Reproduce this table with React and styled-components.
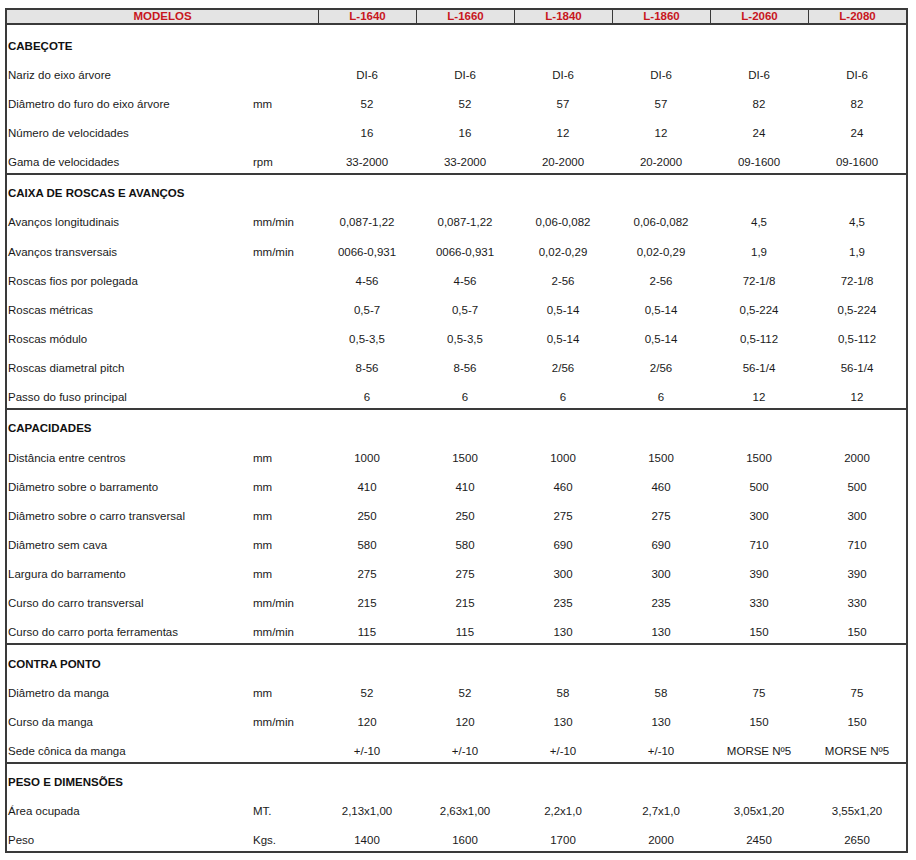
import React from 'react';
import styled, { createGlobalStyle } from 'styled-components';

const GlobalStyle = createGlobalStyle`
  html, body {
    margin: 0;
    background: #fff;
  }
  body {
    font-family: "Liberation Sans", Arial, sans-serif;
    font-size: 11.5px;
    color: #1a1a1a;
  }
`;

const COLS = '246px 65px repeat(6, 1fr)';

const Sheet = styled.div`
  width: 899px;
  margin: 8px 0 0 5px;
  border: 2px solid #3a3a3a;
`;

const HeaderRow = styled.div`
  display: grid;
  grid-template-columns: ${COLS};
  background: #e4e4e4;
  border-bottom: 2px solid #3a3a3a;
`;

const HeaderCell = styled.div`
  grid-column: ${(p) => (p.$wide ? 'span 2' : 'auto')};
  height: 13px;
  line-height: 13px;
  text-align: center;
  font-weight: bold;
  color: #c8161d;
  border-left: ${(p) => (p.$wide ? 'none' : '1px solid #3a3a3a')};
`;

const Section = styled.div`
  padding-top: ${(p) => (p.$first ? '2px' : '0')};
  border-bottom: ${(p) => (p.$last ? 'none' : '2px solid #3a3a3a')};
`;

const Row = styled.div`
  display: grid;
  grid-template-columns: ${COLS};
  align-items: end;
  height: 29.15px;
  box-sizing: border-box;
  padding-bottom: 3.5px;
  line-height: 13px;
`;

const Label = styled.div`
  padding-left: 1px;
  white-space: nowrap;
  font-weight: ${(p) => (p.$title ? 'bold' : 'normal')};
  color: ${(p) => (p.$title ? '#111' : '#1a1a1a')};
`;

const Unit = styled.div`
  white-space: nowrap;
`;

const Value = styled.div`
  text-align: center;
  white-space: nowrap;
`;

const models = ['L-1640', 'L-1660', 'L-1840', 'L-1860', 'L-2060', 'L-2080'];

const sections = [
  {
    title: 'CABEÇOTE',
    rows: [
      ['Nariz do eixo árvore', '', ['DI-6', 'DI-6', 'DI-6', 'DI-6', 'DI-6', 'DI-6']],
      ['Diâmetro do furo do eixo árvore', 'mm', ['52', '52', '57', '57', '82', '82']],
      ['Número de velocidades', '', ['16', '16', '12', '12', '24', '24']],
      ['Gama de velocidades', 'rpm', ['33-2000', '33-2000', '20-2000', '20-2000', '09-1600', '09-1600']],
    ],
  },
  {
    title: 'CAIXA DE ROSCAS E AVANÇOS',
    rows: [
      ['Avanços longitudinais', 'mm/min', ['0,087-1,22', '0,087-1,22', '0,06-0,082', '0,06-0,082', '4,5', '4,5']],
      ['Avanços transversais', 'mm/min', ['0066-0,931', '0066-0,931', '0,02-0,29', '0,02-0,29', '1,9', '1,9']],
      ['Roscas fios por polegada', '', ['4-56', '4-56', '2-56', '2-56', '72-1/8', '72-1/8']],
      ['Roscas métricas', '', ['0,5-7', '0,5-7', '0,5-14', '0,5-14', '0,5-224', '0,5-224']],
      ['Roscas módulo', '', ['0,5-3,5', '0,5-3,5', '0,5-14', '0,5-14', '0,5-112', '0,5-112']],
      ['Roscas diametral pitch', '', ['8-56', '8-56', '2/56', '2/56', '56-1/4', '56-1/4']],
      ['Passo do fuso principal', '', ['6', '6', '6', '6', '12', '12']],
    ],
  },
  {
    title: 'CAPACIDADES',
    rows: [
      ['Distância entre centros', 'mm', ['1000', '1500', '1000', '1500', '1500', '2000']],
      ['Diâmetro sobre o barramento', 'mm', ['410', '410', '460', '460', '500', '500']],
      ['Diâmetro sobre o carro transversal', 'mm', ['250', '250', '275', '275', '300', '300']],
      ['Diâmetro sem cava', 'mm', ['580', '580', '690', '690', '710', '710']],
      ['Largura do barramento', 'mm', ['275', '275', '300', '300', '390', '390']],
      ['Curso do carro transversal', 'mm/min', ['215', '215', '235', '235', '330', '330']],
      ['Curso do carro porta ferramentas', 'mm/min', ['115', '115', '130', '130', '150', '150']],
    ],
  },
  {
    title: 'CONTRA PONTO',
    rows: [
      ['Diâmetro da manga', 'mm', ['52', '52', '58', '58', '75', '75']],
      ['Curso da manga', 'mm/min', ['120', '120', '130', '130', '150', '150']],
      ['Sede cônica da manga', '', ['+/-10', '+/-10', '+/-10', '+/-10', 'MORSE Nº5', 'MORSE Nº5']],
    ],
  },
  {
    title: 'PESO E DIMENSÕES',
    rows: [
      ['Área ocupada', 'MT.', ['2,13x1,00', '2,63x1,00', '2,2x1,0', '2,7x1,0', '3,05x1,20', '3,55x1,20']],
      ['Peso', 'Kgs.', ['1400', '1600', '1700', '2000', '2450', '2650']],
    ],
  },
];

export default function App() {
  return (
    <>
      <GlobalStyle />
      <Sheet>
        <HeaderRow>
          <HeaderCell $wide>MODELOS</HeaderCell>
          {models.map((m) => (
            <HeaderCell key={m}>{m}</HeaderCell>
          ))}
        </HeaderRow>
        {sections.map((s, i) => (
          <Section key={s.title} $first={i === 0} $last={i === sections.length - 1}>
            <Row>
              <Label $title>{s.title}</Label>
            </Row>
            {s.rows.map(([label, unit, values]) => (
              <Row key={label}>
                <Label>{label}</Label>
                <Unit>{unit}</Unit>
                {values.map((v, k) => (
                  <Value key={k}>{v}</Value>
                ))}
              </Row>
            ))}
          </Section>
        ))}
      </Sheet>
    </>
  );
}
